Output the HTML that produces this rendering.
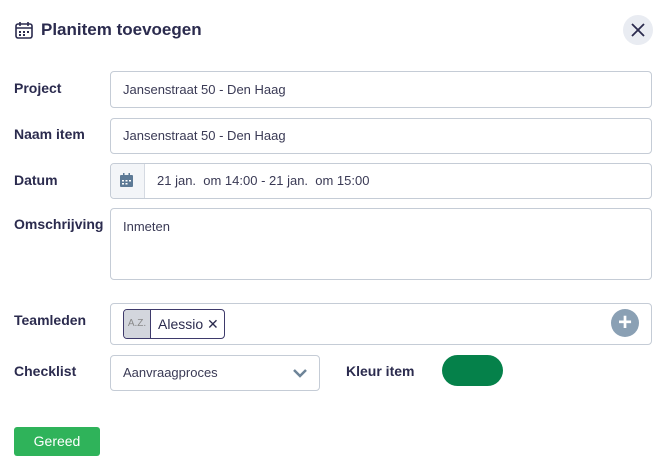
<!DOCTYPE html>
<html><head><meta charset="utf-8"><style>
body{margin:0;width:670px;height:470px;background:#fff;font-family:"Liberation Sans",sans-serif;color:#2b2b4e;position:relative;overflow:hidden}
.a{position:absolute}
.lbl{position:absolute;left:14px;font-size:14px;font-weight:bold;color:#2b2b4e}
.in{position:absolute;left:110px;width:542px;border:1px solid #c5ccd6;border-radius:4px;box-sizing:border-box;font-size:13px;color:#3a3a55;padding-left:12px}
</style></head><body>
<svg class="a" style="left:14px;top:20px" width="20" height="20" viewBox="0 0 20 20" fill="none" stroke="#2b2b4e" stroke-width="1.6"><rect x="2" y="4" width="16" height="14" rx="2"/><path d="M2 8h16M6 2v4M14 2v4"/><g fill="#2b2b4e" stroke="none"><rect x="5" y="11" width="2" height="2"/><rect x="9" y="11" width="2" height="2"/><rect x="13" y="11" width="2" height="2"/><rect x="5" y="14" width="2" height="2"/><rect x="9" y="14" width="2" height="2"/></g></svg>
<div class="a" style="left:41px;top:20px;font-size:17px;font-weight:bold">Planitem toevoegen</div>
<div class="a" style="left:623px;top:15px;width:30px;height:30px;border-radius:50%;background:#e9ecf2"></div>
<svg class="a" style="left:630px;top:22px" width="16" height="16" viewBox="0 0 16 16" stroke="#2b2b4e" stroke-width="1.8"><path d="M2 2l12 12M14 2L2 14"/></svg>
<div class="lbl" style="top:80px">Project</div>
<div class="in" style="top:71px;height:37px;line-height:35px">Jansenstraat 50 - Den Haag</div>
<div class="lbl" style="top:126px">Naam item</div>
<div class="in" style="top:118px;height:36px;line-height:34px">Jansenstraat 50 - Den Haag</div>
<div class="lbl" style="top:172px">Datum</div>
<div class="in" style="top:163px;height:36px;line-height:34px;padding-left:46px">21 jan.&nbsp; om 14:00 - 21 jan.&nbsp; om 15:00</div>
<div class="a" style="left:111px;top:164px;width:33px;height:34px;background:#f3f5f8;border-right:1px solid #d5dae2;border-radius:4px 0 0 4px"></div>
<svg class="a" style="left:120px;top:173px" width="13" height="14" viewBox="0 0 13 14"><rect x="0" y="2" width="13" height="12" rx="1" fill="#5d7a96"/><rect x="3" y="0" width="1.5" height="3" fill="#5d7a96"/><rect x="8.5" y="0" width="1.5" height="3" fill="#5d7a96"/><g fill="#fff"><rect x="2" y="7" width="2" height="1.5"/><rect x="5.5" y="7" width="2" height="1.5"/><rect x="9" y="7" width="2" height="1.5"/><rect x="2" y="10" width="2" height="1.5"/><rect x="5.5" y="10" width="2" height="1.5"/></g></svg>
<div class="lbl" style="top:216px">Omschrijving</div>
<div class="in" style="top:208px;height:72px;padding-top:10px">Inmeten</div>
<div class="lbl" style="top:312px">Teamleden</div>
<div class="in" style="top:303px;height:42px"></div>
<div class="a" style="left:123px;top:309px;width:100px;height:28px;border:1px solid #3e3a6b;border-radius:4px;overflow:hidden">
<div class="a" style="left:0;top:0;width:26px;height:28px;background:#d3d6dd;border-right:1px solid #3e3a6b;font-size:10px;color:#888;line-height:28px;text-align:center">A.Z.</div>
<div class="a" style="left:34px;top:0;line-height:28px;font-size:14px;color:#2b2b4e">Alessio ✕</div></div>
<div class="a" style="left:611px;top:309px;width:28px;height:28px;border-radius:50%;background:#8aa0b4;color:#fff;font-size:24px;font-weight:bold;line-height:27px;text-align:center">+</div>
<div class="lbl" style="top:363px">Checklist</div>
<div class="in" style="top:355px;width:210px;height:36px;line-height:34px">Aanvraagproces</div>
<svg class="a" style="left:292px;top:368px" width="16" height="10" viewBox="0 0 16 10"><path d="M2 2l6 6 6-6" stroke="#6d8498" stroke-width="2.5" fill="none"/></svg>
<div class="a" style="left:346px;top:363px;font-size:14px;font-weight:bold">Kleur item</div>
<div class="a" style="left:442px;top:355px;width:61px;height:31px;border-radius:16px;background:#05814a"></div>
<div class="a" style="left:14px;top:427px;width:86px;height:29px;background:#2fb35a;border-radius:3px;color:#fff;font-size:14px;line-height:29px;text-align:center">Gereed</div>
</body></html>
